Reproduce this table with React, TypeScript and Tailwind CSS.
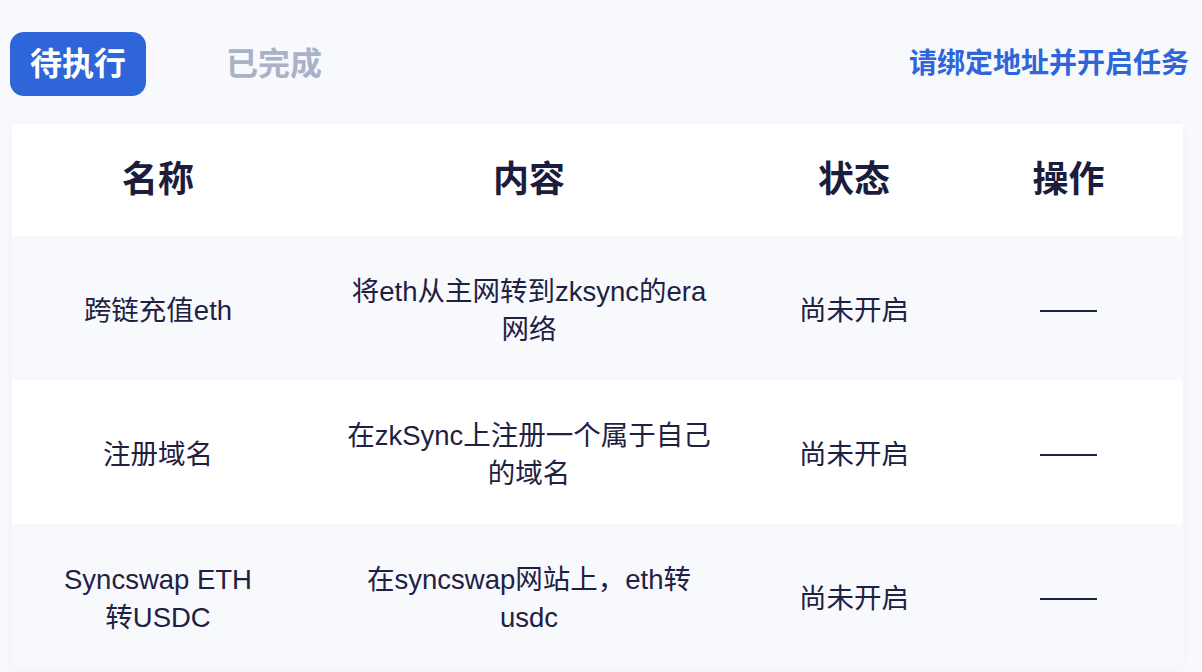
import React from 'react';

const FONT = "font-['Liberation_Sans','Noto_Sans_CJK_SC',sans-serif]";

type Task = { name: string[]; content: string[]; status: string };

const TASKS: Task[] = [
  { name: ['跨链充值eth'], content: ['将eth从主网转到zksync的era', '网络'], status: '尚未开启' },
  { name: ['注册域名'], content: ['在zkSync上注册一个属于自己', '的域名'], status: '尚未开启' },
  { name: ['Syncswap ETH', '转USDC'], content: ['在syncswap网站上，eth转', 'usdc'], status: '尚未开启' },
];

const COLS = 'grid grid-cols-[292px_450px_200px_1fr] items-center';

function Lines({ lines }: { lines: string[] }) {
  return (
    <div className="text-center">
      {lines.map((l, i) => (
        <div key={i} className="whitespace-nowrap">{l}</div>
      ))}
    </div>
  );
}

export default function App() {
  return (
    <div className={`${FONT} w-[1202px] h-[672px] overflow-hidden bg-[#f7f9fd]`}>
      <div className="flex items-center justify-between pt-[32px] pl-[10px] pr-[13px]">
        <div className="flex items-center">
          <button className="h-[64px] w-[136px] rounded-[14px] bg-[#2e65d8] text-white text-[32px] font-bold">
            待执行
          </button>
          <button className="ml-[80px] text-[32px] font-bold text-[#aab1c8]">已完成</button>
        </div>
        <div className="text-[28px] font-bold text-[#2e65d8]">请绑定地址并开启任务</div>
      </div>

      <div className="mt-[28px] ml-[12px] w-[1171px] shadow-[0_0_8px_rgba(30,50,120,0.04)]">
        <div className={`${COLS} h-[112px] bg-white text-[36px] font-bold text-[#1c1d3d]`}>
          <div className="text-center">名称</div>
          <div className="text-center">内容</div>
          <div className="text-center">状态</div>
          <div className="text-center">操作</div>
        </div>
        {TASKS.map((t, i) => (
          <div
            key={i}
            className={`${COLS} h-[144px] pt-[6px] text-[27.5px] leading-[38px] text-[#1f2142] ${
              i % 2 === 0 ? 'bg-[#f7f9fd]' : 'bg-white'
            }`}
          >
            <Lines lines={t.name} />
            <Lines lines={t.content} />
            <div className="text-center">{t.status}</div>
            <div className="flex justify-center">
              <div className="h-[2px] w-[57px] bg-[#1f2142]" />
            </div>
          </div>
        ))}
      </div>
    </div>
  );
}
